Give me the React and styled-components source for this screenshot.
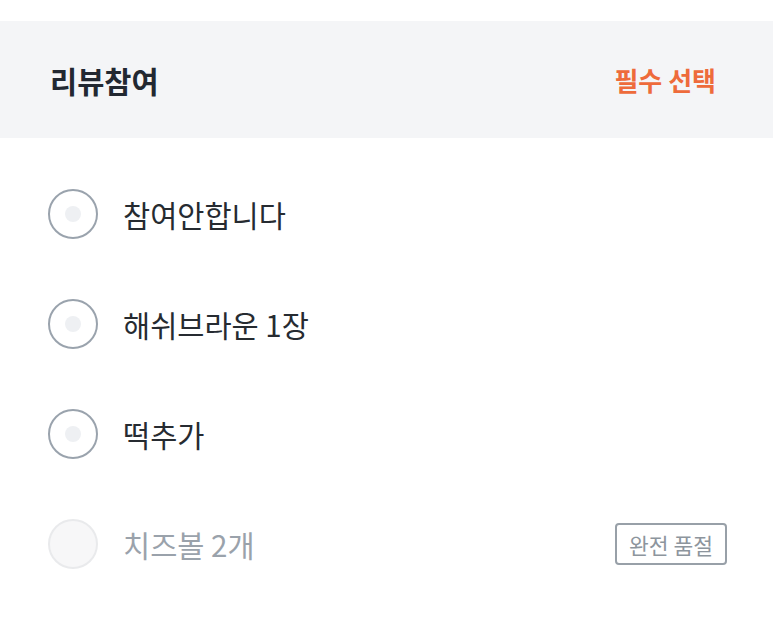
import React from 'react';
import styled, { createGlobalStyle } from 'styled-components';

const GlobalStyle = createGlobalStyle`
  html, body {
    margin: 0;
    padding: 0;
    background: #fff;
  }
  body {
    font-family: "Noto Sans CJK KR", "Noto Sans", sans-serif;
  }
`;

const Section = styled.section`
  padding-top: 21px;
  width: 773px;
`;

const Header = styled.div`
  height: 117px;
  background: #f4f5f7;
  display: flex;
  align-items: center;
  justify-content: space-between;
  padding: 0 57px 0 50px;
  box-sizing: border-box;
`;

const Title = styled.h2`
  margin: 0;
  font-size: 29.5px;
  font-weight: 700;
  color: #222831;
`;

const Required = styled.span`
  font-size: 26px;
  font-weight: 700;
  color: #ee6b3b;
`;

const List = styled.ul`
  list-style: none;
  margin: 0;
  padding: 21px 46px 0 48px;
`;

const Row = styled.li`
  height: 110px;
  display: flex;
  align-items: center;
  gap: 25px;
`;

const Radio = styled.span`
  width: 50px;
  height: 50px;
  box-sizing: border-box;
  border-radius: 50%;
  border: 2px solid ${(p) => (p.$disabled ? '#e9eaec' : '#9aa3ad')};
  background: ${(p) => (p.$disabled ? '#f7f7f8' : '#fff')};
  display: flex;
  align-items: center;
  justify-content: center;
  flex-shrink: 0;

  &::after {
    content: '';
    width: 16px;
    height: 16px;
    border-radius: 50%;
    background: ${(p) => (p.$disabled ? 'transparent' : '#eef0f3')};
  }
`;

const Label = styled.span`
  flex: 1;
  font-size: 29.5px;
  color: ${(p) => (p.$disabled ? '#9aa2ab' : '#262b31')};
`;

const SoldOut = styled.span`
  border: 2px solid #98a0a8;
  border-radius: 4px;
  padding: 0 12px;
  height: 42px;
  box-sizing: border-box;
  display: flex;
  align-items: center;
  font-size: 21.5px;
  color: #8d959d;
`;

const options = [
  { label: '참여안합니다' },
  { label: '해쉬브라운 1장' },
  { label: '떡추가' },
  { label: '치즈볼 2개', soldOut: true },
];

const App = () => {
  return (
    <>
      <GlobalStyle />
      <Section>
        <Header>
          <Title>리뷰참여</Title>
          <Required>필수 선택</Required>
        </Header>
        <List>
          {options.map((option) => (
            <Row key={option.label}>
              <Radio $disabled={option.soldOut} />
              <Label $disabled={option.soldOut}>{option.label}</Label>
              {option.soldOut && <SoldOut>완전 품절</SoldOut>}
            </Row>
          ))}
        </List>
      </Section>
    </>
  );
};

export default App;
